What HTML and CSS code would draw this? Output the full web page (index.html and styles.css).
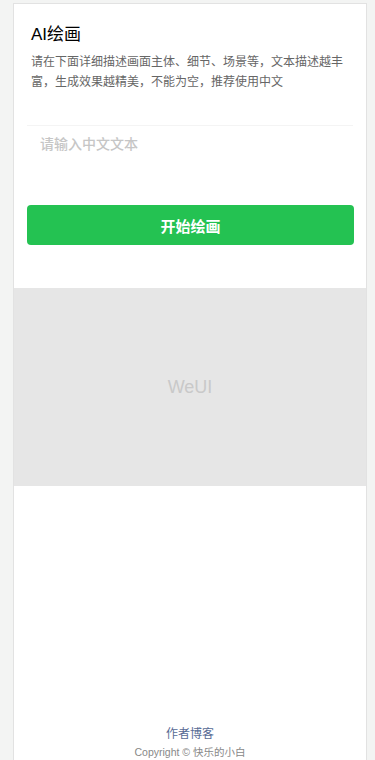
FILE: index.html
```html
<!DOCTYPE html>
<html lang="zh">
<head>
    <meta charset="UTF-8">
    <meta name="viewport" content="width=device-width, initial-scale=1.0">
    <title>AI绘画</title>
    <link rel="stylesheet" href="styles.css">
</head>
<body>

<div class="page">
    <div class="page-hd">
        <h2 class="page-title">AI绘画</h2>
        <p class="page-desc">请在下面详细描述画面主体、细节、场景等，文本描述越丰富，生成效果越精美，不能为空，推荐使用中文</p>
    </div>

    <!-- 输入区域 -->
    <div class="cells">
        <textarea class="textarea" placeholder="请输入中文文本" rows="3"></textarea>
    </div>

    <button class="btn-primary">开始绘画</button>

    <!-- 图片占位 -->
    <div class="preview">WeUI</div>

    <div class="footer">
        <a class="footer-link" href="#">作者博客</a>
        <p class="footer-text">Copyright © 快乐的小白</p>
    </div>
</div>

</body>
</html>
```

FILE: styles.css
```css
html, body {
    margin: 0;
    padding: 0;
}
body {
    font-family: "Liberation Sans", "Noto Sans CJK SC", sans-serif;
    background: #f3f4f3;
    color: #000;
}
.page {
    box-sizing: border-box;
    width: 354px;
    height: calc(100vh - 3px);
    margin: 3px 0 0 13px;
    background: #fff;
    border: 1px solid #e2e2e2;
    border-bottom: none;
    display: flex;
    flex-direction: column;
}
.page-hd {
    padding: 19px 17px 0;
}
.page-title {
    margin: 0;
    font-size: 17px;
    font-weight: normal;
    line-height: 24px;
}
.page-desc {
    margin: 5px 0 0;
    font-size: 12px;
    line-height: 20px;
    color: #666;
}
.cells {
    margin: 33px 13px 0;
    border-top: 1px solid #f4f4f4;
}
.textarea {
    display: block;
    box-sizing: border-box;
    width: 100%;
    height: 79px;
    padding: 7px 13px 6px;
    border: none;
    outline: none;
    resize: none;
    font-family: inherit;
    font-size: 14px;
    line-height: 22px;
    font-weight: 500;
    color: #333;
}
.textarea::placeholder {
    color: #c6c6c6;
}
.btn-primary {
    margin: 0 12px 0 13px;
    height: 40px;
    border: none;
    border-radius: 4px;
    background: #24c252;
    color: #fff;
    font-family: inherit;
    font-size: 15px;
    font-weight: bold;
    cursor: pointer;
}
.preview {
    margin-top: 43px;
    height: 198px;
    background: #e6e6e6;
    color: #c9c9c9;
    font-size: 18px;
    display: flex;
    align-items: center;
    justify-content: center;
}
.footer {
    margin-top: auto;
    text-align: center;
}
.footer-link {
    display: block;
    font-size: 12px;
    line-height: 18px;
    color: #576b95;
    text-decoration: none;
}
.footer-text {
    margin: 2px 0 0;
    font-size: 10.5px;
    line-height: 15px;
    color: #888;
}
```
